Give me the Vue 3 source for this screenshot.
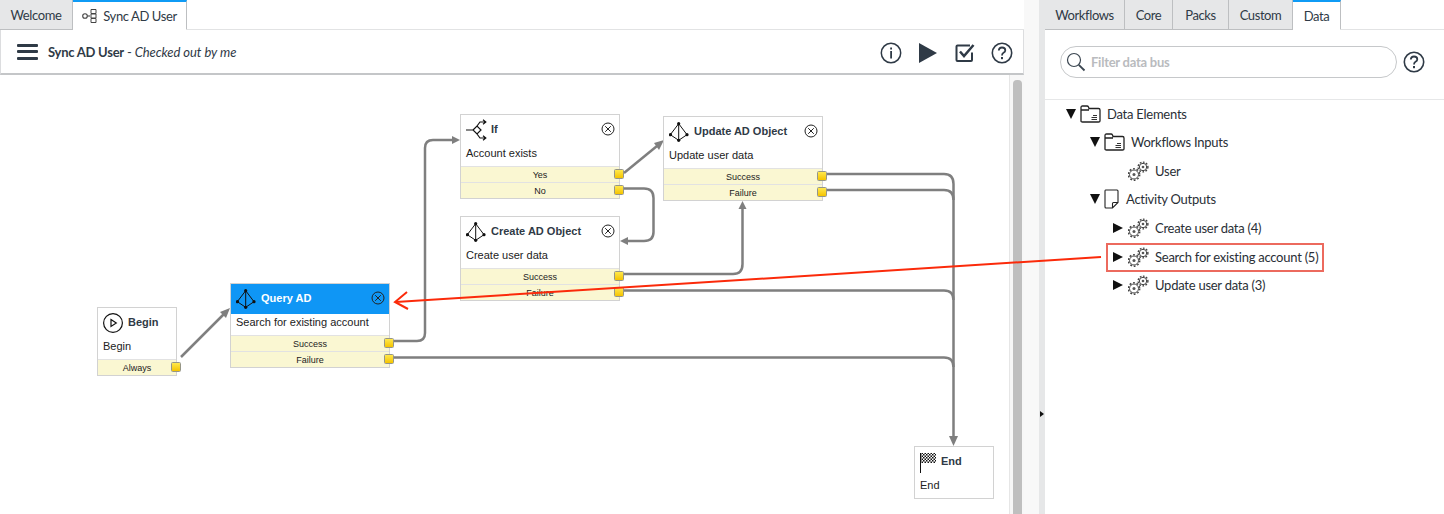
<script setup>
const nodes = [
  { id: 'begin', x: 97, y: 307, w: 80, title: 'Begin', desc: 'Begin', icon: 'i-begin', rows: ['Always'], close: false },
  { id: 'query', x: 230, y: 283, w: 160, title: 'Query AD', desc: 'Search for existing account', icon: 'i-ad', rows: ['Success', 'Failure'], close: true, active: true },
  { id: 'if', x: 460, y: 114, w: 160, title: 'If', desc: 'Account exists', icon: 'i-if', rows: ['Yes', 'No'], close: true },
  { id: 'create', x: 460, y: 216, w: 160, title: 'Create AD Object', desc: 'Create user data', icon: 'i-ad', rows: ['Success', 'Failure'], close: true },
  { id: 'update', x: 663, y: 116, w: 160, title: 'Update AD Object', desc: 'Update user data', icon: 'i-ad', rows: ['Success', 'Failure'], close: true },
  { id: 'end', x: 914, y: 446, w: 80, title: 'End', desc: 'End', icon: 'i-flag', rows: [], close: false },
]
const wires = [
  { d: 'M181 357 L224 314', head: '230,308 220,312 226,318' },
  { d: 'M394 341 H417 Q425 341 425 333 V148 Q425 140 433 140 H454', head: '460,140 452,136 452,144' },
  { d: 'M394 357.500 H944 Q953.500 357.500 953.500 367' },
  { d: 'M624 173 L657 146', head: '664,140 654,143 659,150' },
  { d: 'M624 188.500 H644 Q653.500 188.500 653.500 198 V232 Q653.500 241 644 241 H626', head: '620,241 628,237 628,245' },
  { d: 'M624 274 H733 Q742.500 274 742.500 264 V208', head: '742.500,201 738.500,209 746.500,209' },
  { d: 'M624 290.500 H944 Q953.500 290.500 953.500 300' },
  { d: 'M827 174 H944 Q953.500 174 953.500 184 V439', head: '953.500,446 949,436 958,436' },
  { d: 'M827 190 H944 Q953.500 190 953.500 200' },
]
const panelTabs = ['Workflows', 'Core', 'Packs', 'Custom', 'Data']
const tree = [
  { label: 'Data Elements', lvl: 'lvl0', tri: 'down', icon: 'i-folder', kind: 'wide' },
  { label: 'Workflows Inputs', lvl: 'lvl1', tri: 'down', icon: 'i-folder', kind: 'wide' },
  { label: 'User', lvl: 'lvl2', tri: '', icon: 'i-gears', kind: 'wide' },
  { label: 'Activity Outputs', lvl: 'lvl1', tri: 'down', icon: 'i-doc', kind: 'doc' },
  { label: 'Create user data (4)', lvl: 'lvl2', tri: 'right', icon: 'i-gears', kind: 'wide' },
  { label: 'Search for existing account (5)', lvl: 'lvl2', tri: 'right', icon: 'i-gears', kind: 'wide', hit: true },
  { label: 'Update user data (3)', lvl: 'lvl2', tri: 'right', icon: 'i-gears', kind: 'wide' },
]
</script>

<template>
  <div class="app">
    <svg class="defs" width="0" height="0" aria-hidden="true">
      <defs>
        <pattern id="chk" width="3" height="3" patternUnits="userSpaceOnUse">
          <rect width="3" height="3" fill="#fff" />
          <rect width="1.500" height="1.500" fill="#111" />
          <rect x="1.500" y="1.500" width="1.500" height="1.500" fill="#111" />
        </pattern>
        <symbol id="i-ad" viewBox="0 0 22 22">
          <path d="M9.700 2.700 L1.300 13.700 L9.700 19.300 L18 13.700 Z M9.700 2.700 V19.300" fill="none" stroke="currentColor" stroke-width="1" />
          <circle cx="9.700" cy="2.700" r="1.600" fill="currentColor" />
          <circle cx="1.500" cy="13.700" r="1.600" fill="currentColor" />
          <circle cx="18" cy="13.700" r="1.600" fill="currentColor" />
          <circle cx="9.700" cy="19.300" r="1.600" fill="currentColor" />
        </symbol>
        <symbol id="i-if" viewBox="0 0 22 22">
          <path d="M0 11 H7 M7 11 L11 7 L15 11 L11 15 Z M11 7 L14 3 H19.500 M11 15 L14 19 H19.500 M17 0.800 L19.800 3 L17 5.200 M17 16.800 L19.800 19 L17 21.200" fill="none" stroke="#111" stroke-width="1.200" />
        </symbol>
        <symbol id="i-begin" viewBox="0 0 22 22">
          <circle cx="10" cy="11" r="9.400" fill="none" stroke="#111" stroke-width="1.200" />
          <path d="M8 7.500 L13.300 11 L8 14.500 Z" fill="none" stroke="#111" stroke-width="1.200" />
        </symbol>
        <symbol id="i-flag" viewBox="0 0 22 22">
          <rect x="0.500" y="2" width="15.500" height="10" fill="url(#chk)" />
          <path d="M0.500 2 V22" stroke="#111" stroke-width="1" />
        </symbol>
        <symbol id="i-folder" viewBox="0 0 21 18">
          <path d="M1 16 V2.500 Q1 1 2.500 1 H7 Q8 1 8.500 2 L9 3.500 H18.500 Q20 3.500 20 5 V16 Q20 17 18.500 17 H2.500 Q1 17 1 16 Z M1 5 H9" fill="none" stroke="#222" stroke-width="1.300" />
          <path d="M13 10.500 H17 M11.500 12.500 H17 M11.500 14.500 H17" stroke="#333" stroke-width="1.100" />
        </symbol>
        <symbol id="i-doc" viewBox="0 0 15 20">
          <path d="M1.500 1 H13 Q14 1 14 2 V13.500 L8.500 19 H2 Q1 19 1 18 V2 Q1 1 1.500 1 Z M14 13.500 H9.500 Q8.500 13.500 8.500 14.500 V19" fill="none" stroke="#222" stroke-width="1.100" />
        </symbol>
        <symbol id="i-gears" viewBox="0 0 21 20">
          <g fill="none" stroke="#444">
            <circle cx="6" cy="13.500" r="4.500" stroke-width="1" />
            <circle cx="6" cy="13.500" r="5.700" stroke-width="1.500" stroke-dasharray="1.800 1.800" />
            <circle cx="15" cy="6" r="3.700" stroke-width="1" />
            <circle cx="15" cy="6" r="4.900" stroke-width="1.400" stroke-dasharray="1.700 1.500" />
          </g>
          <circle cx="6" cy="13.500" r="1.500" fill="#555" />
          <circle cx="15" cy="6" r="1.300" fill="#555" />
        </symbol>
        <symbol id="i-help" viewBox="0 0 22 22">
          <circle cx="11" cy="11" r="9.700" fill="none" stroke="#2f3a46" stroke-width="1.600" />
          <path d="M7.800 8.500 Q8 5.500 11 5.500 Q14.300 5.500 14.300 8.200 Q14.300 9.800 12.500 10.800 Q11 11.700 11 13.500" fill="none" stroke="#2f3a46" stroke-width="1.800" />
          <rect x="10" y="15" width="2" height="2.200" fill="#2f3a46" />
        </symbol>
      </defs>
    </svg>

    <section class="main">
      <nav class="tabs">
        <div class="tab first">Welcome</div>
        <div class="tab on wide-tab">
          <svg class="tab-icon" viewBox="0 0 16 16" width="16" height="16">
            <circle cx="3" cy="8" r="2.300" fill="none" stroke="#444" stroke-width="1.100" />
            <path d="M5.300 8 H8" stroke="#444" stroke-width="1.100" />
            <path d="M9 1.500 H14 V5.500 H9 Z M9 6 H14 V10 H9 Z M9 10.500 H14 V14.500 H9 Z" fill="none" stroke="#444" stroke-width="1" />
          </svg>
          Sync AD User
        </div>
      </nav>
      <header class="bar">
        <div class="burger"><i></i><i></i><i></i></div>
        <div class="heading"><b>Sync AD User</b> - <em>Checked out by me</em></div>
        <div class="tools">
          <svg viewBox="0 0 22 22" width="22" height="22">
            <circle cx="11" cy="11" r="9.700" fill="none" stroke="#2f3a46" stroke-width="1.500" />
            <rect x="10.200" y="9" width="1.800" height="7.500" fill="#2f3a46" />
            <rect x="10.200" y="5.500" width="1.800" height="2" fill="#2f3a46" />
          </svg>
          <svg viewBox="0 0 18 20" width="18" height="20"><path d="M0 0 L18 10 L0 20 Z" fill="#2f3a46" /></svg>
          <svg class="check" viewBox="0 0 20 20" width="20" height="20">
            <path d="M17 9.500 V17 Q17 18 16 18 H2.500 Q1.500 18 1.500 17 V3.500 Q1.500 2.500 2.500 2.500 H15" fill="none" stroke="#2f3a46" stroke-width="2" />
            <path d="M5 8.500 L9 13 L18.500 2" fill="none" stroke="#2f3a46" stroke-width="2.500" />
          </svg>
          <svg width="22" height="22"><use href="#i-help" /></svg>
        </div>
      </header>
      <div class="work">
        <div class="canvas">
          <svg class="wires" viewBox="0 75 1009 439" width="1009" height="439">
            <g v-for="w in wires" :key="w.d">
              <path :d="w.d" fill="none" stroke="#7f7f7f" stroke-width="2.500" />
              <polygon v-if="w.head" :points="w.head" fill="#7f7f7f" />
            </g>
          </svg>
          <article
            v-for="n in nodes"
            :key="n.id"
            class="node"
            :class="[n.id, { active: n.active }]"
            :style="{ left: n.x + 'px', top: n.y - 75 + 'px', width: n.w + 'px' }"
          >
            <div class="node-head">
              <svg class="node-icon" width="22" height="22"><use :href="'#' + n.icon" /></svg>
              <span class="node-title">{{ n.title }}</span>
              <svg v-if="n.close" class="node-close" viewBox="0 0 14 14" width="14" height="14">
                <circle cx="7" cy="7" r="6" fill="none" stroke="currentColor" stroke-width="1" />
                <path d="M4.200 4.200 L9.800 9.800 M9.800 4.200 L4.200 9.800" stroke="currentColor" stroke-width="1" />
              </svg>
            </div>
            <div class="node-desc">{{ n.desc }}</div>
            <div v-for="r in n.rows" :key="r" class="node-row">
              {{ r }}
              <span class="port"></span>
            </div>
          </article>
        </div>
        <div class="track"><div class="thumb"></div></div>
      </div>
    </section>

    <div class="gutter"></div>
    <div class="splitter"><span class="nub"></span></div>

    <aside class="panel">
      <nav class="tabs panel-tabs">
        <div v-for="t in panelTabs" :key="t" class="tab" :class="{ on: t === 'Data' }">{{ t }}</div>
      </nav>
      <div class="filter">
        <div class="search">
          <svg viewBox="0 0 20 20" width="20" height="20">
            <circle cx="8" cy="8" r="6.500" fill="none" stroke="#3a4550" stroke-width="1.200" />
            <path d="M12.800 12.800 L18.500 18.500" stroke="#3a4550" stroke-width="1.800" />
          </svg>
          <span>Filter data bus</span>
        </div>
        <svg width="22" height="22"><use href="#i-help" /></svg>
      </div>
      <ul class="tree">
        <li v-for="item in tree" :key="item.label" class="leaf" :class="[item.lvl, { hit: item.hit }]">
          <span class="tri" :class="item.tri"></span>
          <svg v-if="item.kind === 'doc'" class="ico-doc" width="15" height="20"><use :href="'#' + item.icon" /></svg>
          <svg v-else class="ico-wide" width="21" height="20"><use :href="'#' + item.icon" /></svg>
          <span>{{ item.label }}</span>
        </li>
      </ul>
    </aside>

    <svg class="pointer" viewBox="0 0 1444 514" width="1444" height="514">
      <path d="M1101 257 L396 302" stroke="#fb2a0a" stroke-width="2" fill="none" />
      <path d="M407 292 L395 302 L408 309" stroke="#fb2a0a" stroke-width="2" fill="none" />
    </svg>
  </div>
</template>

<style>
html, body { margin: 0; background: #fff; }
</style>

<style scoped>
.app {
  position: relative;
  display: flex;
  width: 1444px;
  height: 514px;
  overflow: hidden;
  background: #fff;
  color: #2f3a46;
  font-family: "Lato", "Open Sans", sans-serif;
  font-size: 13px;
  letter-spacing: -0.25px;
}
.defs { position: absolute; }
.main { display: flex; flex-direction: column; width: 1024px; }
.tabs { display: flex; height: 29px; border-bottom: 1px solid #e2e3e4; box-sizing: content-box; }
.tab {
  display: flex;
  align-items: center;
  justify-content: center;
  gap: 5px;
  box-sizing: border-box;
  background: #e6e7e8;
  border-right: 1px solid #bdbfc1;
  border-bottom: 1px solid #bdbfc1;
  margin-bottom: -1px;
  letter-spacing: -0.4px;
}
.tab.first { width: 73px; }
.tab.on { background: #fff; border-top: 2px solid #0f9bf5; border-bottom: 1px solid #fff; }
.wide-tab { width: 114px; }
.tab-icon { flex: none; }
.panel-tabs .tab:nth-child(1) { width: 80px; }
.panel-tabs .tab:nth-child(2) { width: 48px; }
.panel-tabs .tab:nth-child(3) { width: 56px; }
.panel-tabs .tab:nth-child(4) { width: 64px; }
.panel-tabs .tab:nth-child(5) { width: 48px; }
.bar {
  display: flex;
  align-items: center;
  height: 43px;
  border-bottom: 2px solid #c4c6c8;
  border-right: 1px solid #dcdddf;
  border-left: 1px solid #dcdddf;
  padding: 0 10px 0 16px;
}
.burger { display: flex; flex-direction: column; gap: 3.500px; width: 21px; margin-right: 10px; }
.burger i { display: block; height: 3px; background: #2f3a46; border-radius: 1px; }
.heading { flex: 1; }
.heading b { font-weight: 700; }
.heading em { letter-spacing: -0.05px; }
.tools { display: flex; align-items: center; gap: 17px; margin-top: 2px; }
.check { margin-left: 1px; margin-right: -1px; }
.work { flex: 1; display: flex; min-height: 0; }
.canvas { position: relative; width: 1009px; }
.wires { position: absolute; left: 0; top: 0; }
.track {
  width: 15px;
  box-sizing: border-box;
  background: #f7f7f7;
  border-left: 1px solid #e6e6e6;
  padding: 5px 2px 0 3px;
}
.thumb { height: 100%; background: #bfbfbf; border-radius: 4px 4px 0 0; }
.node {
  position: absolute;
  box-sizing: border-box;
  background: #fff;
  border: 1px solid #d2d2d2;
  font-family: "Liberation Sans", Arial, sans-serif;
  font-size: 11px;
  letter-spacing: 0;
  color: #222;
}
.node-head { position: relative; display: flex; align-items: center; height: 30px; box-sizing: border-box; padding: 0 0 0 5px; gap: 3px; color: #111; }
.node-icon { flex: none; }
.node-title { font-weight: 700; color: #2f3a46; margin-top: -2px; }
.node-close { position: absolute; right: 4px; top: 7px; color: #222; }
.end .node-icon { margin-right: -4px; }
.node-desc { height: 21px; padding-left: 5px; line-height: 17px; }
.node-row {
  position: relative;
  height: 16px;
  box-sizing: border-box;
  padding-top: 1px;
  line-height: 15px;
  text-align: center;
  background: #faf7d2;
  border-top: 1px solid #e2e2e2;
  font-size: 9px;
}
.port {
  position: absolute;
  right: -5px;
  top: 2px;
  width: 10px;
  height: 10px;
  box-sizing: border-box;
  border: 1px solid #969686;
  border-radius: 1.500px;
  background: linear-gradient(#ffe84d, #f5c400);
}
.active .node-head { background: #0f96f5; color: #111; }
.active .node-title { color: #fff; }
.gutter { width: 15px; background: #f8f8f8; }
.splitter { position: relative; width: 6px; background: #e6e7e8; }
.nub {
  position: absolute;
  left: 1px;
  top: 411px;
  border-left: 4px solid #111;
  border-top: 3px solid transparent;
  border-bottom: 3px solid transparent;
}
.panel { flex: 1; display: flex; flex-direction: column; }
.filter {
  display: flex;
  align-items: center;
  gap: 6px;
  height: 68.500px;
  box-sizing: content-box;
  padding: 0 0 0 15px;
  border-bottom: 1px solid #e6e7e8;
}
.search {
  display: flex;
  align-items: center;
  gap: 5px;
  width: 337px;
  height: 32px;
  box-sizing: border-box;
  margin-bottom: 4px;
  padding-left: 5px;
  border: 1px solid #c6c8ca;
  border-radius: 16px;
}
.filter > svg { margin-bottom: 4px; }
.search span { color: #b9bbbe; font-weight: 700; }
.tree { list-style: none; margin: 0; padding: 0; }
.leaf { position: relative; display: flex; align-items: center; box-sizing: border-box; height: 28.500px; color: #2a2f36; }
.lvl0 { padding-left: 21px; }
.lvl1 { padding-left: 45px; }
.lvl2 { padding-left: 68px; }
.tri { flex: none; width: 10px; height: 10px; margin-right: 4px; box-sizing: border-box; }
.tri.down { border-top: 10px solid #111; border-left: 5px solid transparent; border-right: 5px solid transparent; height: 0; width: 0; border-bottom: 0; }
.tri.right { border-left: 10px solid #111; border-top: 5px solid transparent; border-bottom: 5px solid transparent; height: 0; width: 0; }
.lvl2 .tri { margin-right: 5px; }
.ico-wide { flex: none; margin-right: 6px; }
.ico-doc { flex: none; margin-right: 7px; }
.hit { padding-top: 1px; }
.hit::after {
  content: "";
  position: absolute;
  left: 61px;
  top: 1px;
  width: 218px;
  height: 29px;
  box-sizing: border-box;
  border: 2px solid #ec6a5e;
}
.pointer { position: absolute; left: 0; top: 0; pointer-events: none; }
</style>
